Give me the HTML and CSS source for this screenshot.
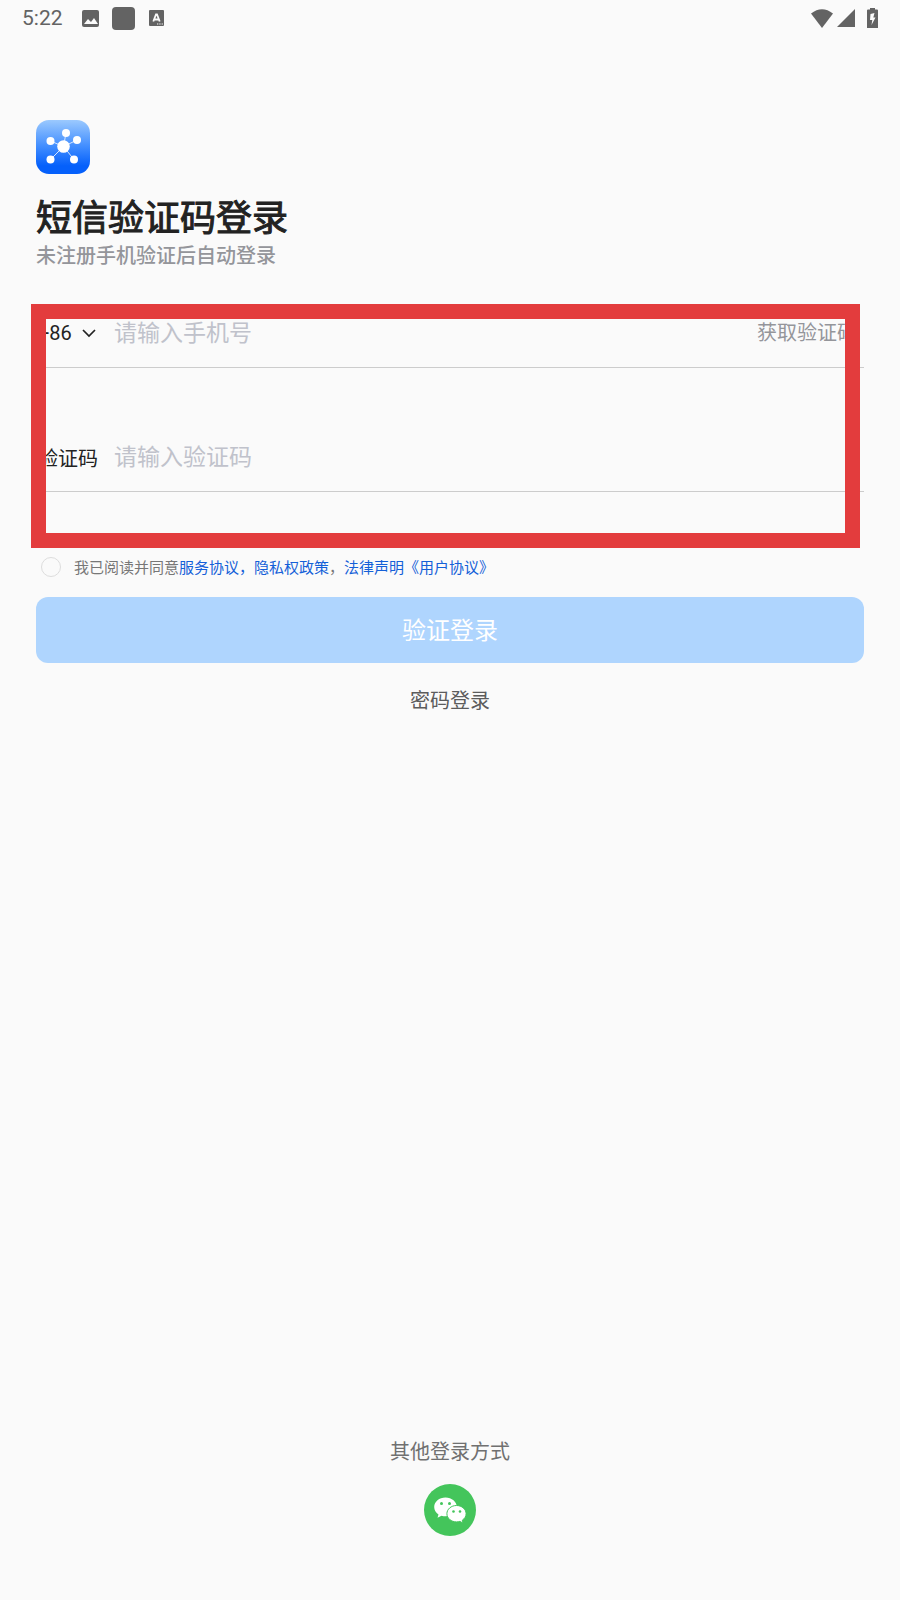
FILE: index.html
```html
<!DOCTYPE html>
<html lang="zh-CN">
<head>
<meta charset="utf-8">
<meta name="viewport" content="width=device-width, initial-scale=1">
<title>短信验证码登录</title>
<link rel="stylesheet" href="styles.css">
</head>
<body>
<div class="screen">
  <header class="status">
    <div class="status-left">
      <time class="clock">5:22</time>
      <svg class="icon-photo" width="17" height="17" viewBox="0 0 17 17" aria-hidden="true">
        <rect width="17" height="17" rx="2" fill="#636363"/>
        <path d="M2 14l4-5 3 3 3-4 4 6z" fill="#fafafa"/>
      </svg>
      <span class="icon-block"></span>
      <svg class="icon-lang" width="15" height="16" viewBox="0 0 15 16" aria-hidden="true">
        <rect width="15" height="16" rx="1" fill="#636363"/>
        <path d="M4.300 11.500L7 4.500h1l2.700 7M5.500 9.500h4" fill="none" stroke="#fafafa" stroke-width="1.800"/>
        <path d="M8 14h1.300M10.300 14h1.300M12.600 14h1.300" stroke="#fafafa" stroke-width="1.200"/>
      </svg>
    </div>
    <div class="status-right">
      <svg width="22" height="19" viewBox="0 0 22 19" aria-hidden="true">
        <path d="M0 4.500Q11-4 22 4.500L11 19z" fill="#636363"/>
      </svg>
      <svg width="18" height="18" viewBox="0 0 18 18" aria-hidden="true">
        <path d="M0 18L18 0v18z" fill="#636363"/>
      </svg>
      <svg class="icon-battery" width="11" height="20" viewBox="0 0 11 20" aria-hidden="true">
        <path d="M3 0h5v1.500h2q1 0 1 1V20H0V2.500q0-1 1-1h2z" fill="#636363"/>
        <path d="M7.500 5L3.500 6l-.5 6h2.300L4.500 17 8.500 9.500H6.300z" fill="#fafafa"/>
      </svg>
    </div>
  </header>

  <main class="login">
    <svg class="logo" width="54" height="54" viewBox="0 0 54 54" role="img" aria-label="应用图标">
      <defs>
        <linearGradient id="logo-fill" x1="0" y1="0" x2="0" y2="1">
          <stop offset="0" stop-color="#9bc9fe"/>
          <stop offset="0.5" stop-color="#3f8cff"/>
          <stop offset="0.85" stop-color="#0560fb"/>
          <stop offset="1" stop-color="#0560fb"/>
        </linearGradient>
      </defs>
      <rect width="54" height="54" rx="13" fill="url(#logo-fill)"/>
      <path d="M27.500 26.500L30 13M27.500 26.500L41 20M27.500 26.500L14.500 21M27.500 26.500L14.500 39.500M27.500 26.500L38 39.500" stroke="#d8e8ff" stroke-width="1"/>
      <g fill="#fff">
        <circle cx="27.500" cy="26.500" r="6.300"/>
        <circle cx="30" cy="13" r="4"/>
        <circle cx="41" cy="20" r="4"/>
        <circle cx="14.500" cy="21" r="4"/>
        <circle cx="14.500" cy="39.500" r="4"/>
        <circle cx="38" cy="39.500" r="4"/>
      </g>
    </svg>
    <h1 class="title">短信验证码登录</h1>
    <p class="subtitle">未注册手机验证后自动登录</p>

    <form>
      <div class="fields">
        <div class="field">
          <button type="button" class="label region">+86
            <svg width="14" height="9" viewBox="0 0 14 9" aria-hidden="true"><path d="M1 1l6 6 6-6" fill="none" stroke="#222" stroke-width="1.700"/></svg>
          </button>
          <input class="input" type="tel" placeholder="请输入手机号" aria-label="手机号">
          <button type="button" class="get-code">获取验证码</button>
        </div>
        <div class="field">
          <label class="label" for="code">验证码</label>
          <input class="input" id="code" type="text" placeholder="请输入验证码">
        </div>
        <div class="highlight"></div>
      </div>

      <div class="agreement">
        <input class="agree-box" id="agree" type="checkbox">
        <div class="agree-text"><label for="agree">我已阅读并同意</label><a href="#service">服务协议，</a><a href="#privacy">隐私权政策</a>，<a href="#legal">法律声明《用户协议》</a></div>
      </div>
      <button type="submit" class="submit">验证登录</button>
    </form>
    <a class="password-login" href="#password">密码登录</a>
  </main>

  <footer class="other">
    <p class="other-title">其他登录方式</p>
    <button type="button" class="wechat" aria-label="微信登录">
      <svg width="52" height="52" viewBox="0 0 52 52" aria-hidden="true">
        <circle cx="26" cy="26" r="26" fill="#44c55b"/>
        <path d="M21.500 13.500c-6.300 0-11.300 4.200-11.300 9.500 0 3.100 1.700 5.700 4.300 7.400l-1 3.400 4-2.100c1.300.4 2.600.6 4 .6 6.300 0 11.300-4.100 11.300-9.300s-5-9.500-11.300-9.500z" fill="#fff"/>
        <circle cx="17.500" cy="19.500" r="1.500" fill="#44c55b"/>
        <circle cx="25.500" cy="19.500" r="1.500" fill="#44c55b"/>
        <path d="M32.500 21.500c-5.300 0-9.600 3.700-9.600 8.200s4.300 8.200 9.600 8.200c1.200 0 2.300-.2 3.400-.5l3.200 1.700-.8-2.900c2.300-1.500 3.800-3.800 3.800-6.500 0-4.500-4.300-8.200-9.600-8.200z" fill="#fff" stroke="#44c55b" stroke-width="1"/>
        <circle cx="29.500" cy="27.500" r="1.300" fill="#44c55b"/>
        <circle cx="36" cy="27.500" r="1.300" fill="#44c55b"/>
      </svg>
    </button>
  </footer>
</div>
</body>
</html>
```
FILE: styles.css
```css
* {
  box-sizing: border-box;
}

body {
  margin: 0;
  background: #fafafa;
  color: #222;
  font-family: Roboto, "Noto Sans CJK SC", sans-serif;
}

h1,
p {
  margin: 0;
}

button,
input {
  padding: 0;
  border: 0;
  background: none;
  color: inherit;
  font-family: inherit;
}

a {
  text-decoration: none;
}

svg {
  display: block;
}

.screen {
  display: flex;
  flex-direction: column;
  min-height: 100vh;
}

.status {
  display: flex;
  justify-content: space-between;
  height: 36px;
  padding: 0 22px;
}

.status-left,
.status-right {
  display: flex;
  align-items: center;
}

.clock {
  color: #636363;
  font-size: 21px;
  line-height: 24px;
}

.icon-photo {
  margin-left: 19px;
}

.icon-block {
  width: 23px;
  height: 23px;
  margin: 0 14px 0 13px;
  border-radius: 4px;
  background: #636363;
}

.status-right {
  gap: 4px;
}

.icon-battery {
  margin-left: 8px;
}

.login {
  display: flex;
  flex-direction: column;
  padding: 84px 36px 0;
}

.title {
  margin-top: 23px;
  font-size: 36px;
  font-weight: 400;
  line-height: 44px;
  -webkit-text-stroke: 1px #222;
}

.subtitle {
  margin: 1px 0 34px;
  color: #94959a;
  font-size: 20px;
  font-weight: 500;
  line-height: 28px;
}

.fields {
  position: relative;
  display: flex;
  flex-direction: column;
  gap: 60px;
  padding-bottom: 56px;
}

.field {
  display: flex;
  align-items: center;
  height: 64px;
  padding-bottom: 5px;
  border-bottom: 1px solid #ccc;
}

.label {
  flex: none;
  width: 78px;
  padding-left: 2px;
  font-size: 20px;
}

.region {
  display: flex;
  align-items: center;
  gap: 10px;
}

.input {
  flex: 1;
  min-width: 0;
  height: 40px;
  font-size: 23px;
  outline: none;
}

.input::placeholder {
  color: #c0c2cb;
}

.get-code {
  margin-right: 7px;
  padding-bottom: 3px;
  color: #94959a;
  font-size: 20px;
}

.highlight {
  position: absolute;
  inset: 0 4px 0 -5px;
  border: 15px solid #e33c3d;
  pointer-events: none;
}

.agreement {
  display: flex;
  align-items: center;
  gap: 13px;
  height: 38px;
  padding-left: 5px;
  color: #777;
  font-size: 15px;
}

.agree-text {
  padding-bottom: 2px;
}

.agreement a {
  color: #1460d8;
}

.agree-box {
  appearance: none;
  width: 20px;
  height: 20px;
  margin: 0;
  border: 1px solid #ddd;
  border-radius: 50%;
}

.submit {
  width: 100%;
  height: 66px;
  margin-top: 11px;
  padding-bottom: 3px;
  border-radius: 12px;
  background: #afd5fe;
  color: #fff;
  font-size: 24px;
}

.password-login {
  align-self: center;
  margin-top: 24px;
  color: #5c5c5c;
  font-size: 20px;
  line-height: 28px;
}

.other {
  display: flex;
  flex-direction: column;
  align-items: center;
  gap: 18px;
  margin-top: auto;
  padding-bottom: 64px;
}

.other-title {
  color: #707070;
  font-size: 20px;
  line-height: 28px;
}
```
